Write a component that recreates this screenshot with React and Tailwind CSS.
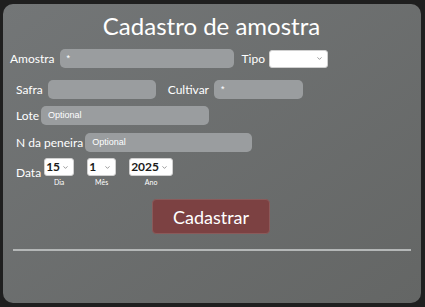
import { ChevronDown } from 'lucide-react';

function Field({ width, placeholder, className = '' }) {
  return (
    <div
      className={`h-[19px] rounded-[5px] bg-[#9a9d9f] flex items-center pl-[7px] text-[9px] text-white font-['Liberation_Sans',sans-serif] ${width} ${className}`}
    >
      {placeholder}
    </div>
  );
}

function Picker({ value, width, caption }) {
  return (
    <div className="flex flex-col items-center">
      <div
        className={`h-[18px] bg-white rounded-[3px] border border-[#d0d0d0] flex items-center justify-between pl-[1px] pr-[4px] text-[#1a1a1a] text-[12px] font-bold ${width}`}
      >
        <span className="leading-none">{value}</span>
        <ChevronDown size={7} strokeWidth={2} className="text-[#555]" />
      </div>
      <span className="text-[7px] text-white leading-none mt-[3px]">{caption}</span>
    </div>
  );
}

export default function App() {
  return (
    <div className="w-[425px] h-[307px] bg-[#1f1f1f] pt-[4px] pl-[3px] font-['Lato',sans-serif]">
      <div className="w-[418px] h-[299px] rounded-[10px] bg-gradient-to-br from-[#737677] to-[#646665] text-white flex flex-col">
        <h1 className="text-center text-[24px] leading-[30px] pt-[7px] mr-[1px]">Cadastro de amostra</h1>

        <div className="flex items-center mt-[8px] pl-[7px] text-[12px]">
          <span>Amostra</span>
          <Field width="w-[174px]" placeholder="*" className="ml-[5px]" />
          <span className="ml-[8px]">Tipo</span>
          <div className="ml-[4px] w-[59px] h-[18px] bg-white rounded-[3px] border border-[#d0d0d0] flex items-center justify-end pr-[4px]">
            <ChevronDown size={7} strokeWidth={2} className="text-[#555]" />
          </div>
        </div>

        <div className="flex items-center mt-[12px] pl-[13px] text-[12px]">
          <span>Safra</span>
          <Field width="w-[108px]" placeholder="" className="ml-[5px]" />
          <span className="ml-[12px]">Cultivar</span>
          <Field width="w-[89px]" placeholder="*" className="ml-[5px]" />
        </div>

        <div className="flex items-center mt-[7px] pl-[13px] text-[12px]">
          <span>Lote</span>
          <Field width="w-[168px]" placeholder="Optional" className="ml-[2px]" />
        </div>

        <div className="flex items-center mt-[8px] pl-[13px] text-[12px]">
          <span>N da peneira</span>
          <Field width="w-[167px]" placeholder="Optional" className="ml-[2px]" />
        </div>

        <div className="flex items-start mt-[6px] pl-[13px] text-[12px]">
          <span className="mt-[6px]">Data</span>
          <div className="flex gap-[13px] ml-[3px]">
            <Picker value="15" width="w-[30px]" caption="Dia" />
            <Picker value="1" width="w-[29px]" caption="Mês" />
            <Picker value="2025" width="w-[44px]" caption="Ano" />
          </div>
        </div>

        <div className="flex justify-center mt-[13px] mr-[2px]">
          <button className="w-[118px] h-[35px] rounded-[4px] bg-[#7c4142] border border-[#8a5a5a] text-white text-[18px] leading-none">
            Cadastrar
          </button>
        </div>

        <div className="mt-[15px] mx-[10px] h-[2px] bg-[#b4b7b7]" />
      </div>
    </div>
  );
}
